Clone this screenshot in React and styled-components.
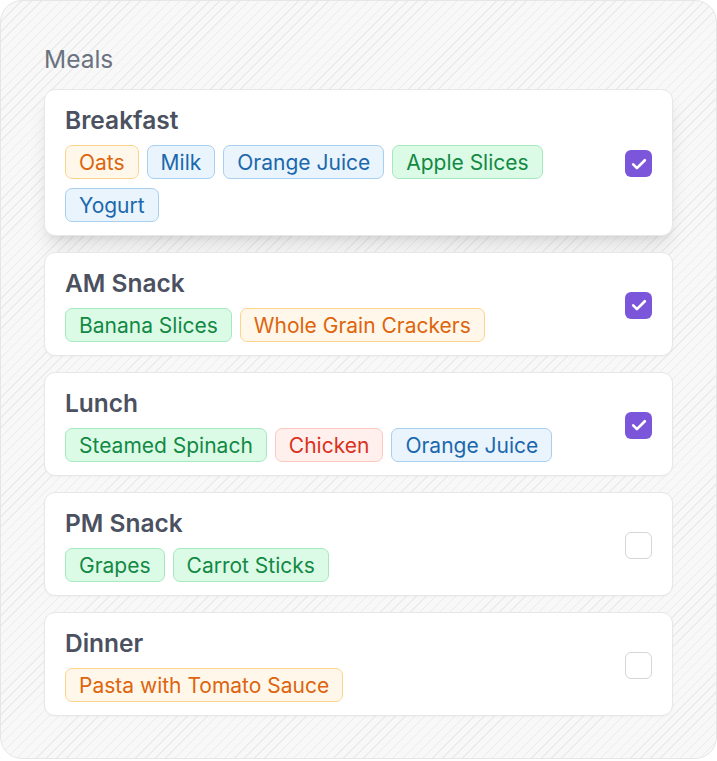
import React from "react";
import styled, { createGlobalStyle } from "styled-components";

const Global = createGlobalStyle`
  html, body { margin: 0; padding: 0; background: #ffffff; }
  body { font-family: Inter, "Noto Sans", sans-serif; -webkit-font-smoothing: antialiased; }
  * { box-sizing: border-box; }
`;

const Panel = styled.section`
  width: 717px;
  border: 1px solid #e6e6e6;
  border-radius: 22px;
  padding: 43px 43px 42px;
  background-color: #f7f7f7;
  background-image: repeating-linear-gradient(
    135deg,
    #ebebeb 0px,
    #ebebeb 1px,
    #f8f8f8 1px,
    #f8f8f8 7px
  );
`;

const Heading = styled.h2`
  margin: 0 0 15px;
  font-size: 24.5px;
  line-height: 30px;
  font-weight: 400;
  color: #6b7280;
`;

const List = styled.div`
  display: flex;
  flex-direction: column;
  gap: 16px;
`;

const Card = styled.div`
  display: flex;
  align-items: center;
  gap: 16px;
  padding: 15px 20px 13px;
  background: #ffffff;
  border: 1px solid #e5e7eb;
  border-radius: 11px;
  box-shadow: ${(p) =>
    p.$raised
      ? "0 14px 20px -4px rgba(0,0,0,0.10), 0 5px 9px -5px rgba(0,0,0,0.10)"
      : "0 1px 2px rgba(0,0,0,0.03)"};
`;

const Body = styled.div`
  flex: 1;
  min-width: 0;
`;

const Title = styled.h3`
  margin: 0 0 10px;
  font-size: 24.5px;
  line-height: 30px;
  font-weight: 600;
  color: #4b5160;
`;

const Tags = styled.div`
  display: flex;
  flex-wrap: wrap;
  column-gap: 8px;
  row-gap: 9px;
`;

const palette = {
  orange: { bg: "#fff8ea", border: "#fcd58c", fg: "#de640d" },
  blue: { bg: "#e9f4fc", border: "#a8cfef", fg: "#1b68ad" },
  green: { bg: "#dcfbe7", border: "#a6e8bf", fg: "#128944" },
  red: { bg: "#fff0ee", border: "#fcc8bf", fg: "#db3220" },
};

const Tag = styled.span`
  display: inline-flex;
  align-items: center;
  height: 34px;
  padding: 0 13px;
  border-radius: 7px;
  border: 1.5px solid ${(p) => palette[p.$tone].border};
  background: ${(p) => palette[p.$tone].bg};
  color: ${(p) => palette[p.$tone].fg};
  font-size: 21px;
  font-weight: 400;
  line-height: 1;
  white-space: nowrap;
`;

const Box = styled.span`
  flex: none;
  width: 27px;
  height: 27px;
  border-radius: 6px;
  display: inline-flex;
  align-items: center;
  justify-content: center;
  background: ${(p) => (p.$checked ? "#7c56da" : "#ffffff")};
  border: ${(p) => (p.$checked ? "none" : "1.5px solid #d4d6da")};
`;

const meals = [
  {
    name: "Breakfast",
    done: true,
    raised: true,
    items: [
      ["Oats", "orange"],
      ["Milk", "blue"],
      ["Orange Juice", "blue"],
      ["Apple Slices", "green"],
      ["Yogurt", "blue"],
    ],
  },
  {
    name: "AM Snack",
    done: true,
    items: [
      ["Banana Slices", "green"],
      ["Whole Grain Crackers", "orange"],
    ],
  },
  {
    name: "Lunch",
    done: true,
    items: [
      ["Steamed Spinach", "green"],
      ["Chicken", "red"],
      ["Orange Juice", "blue"],
    ],
  },
  {
    name: "PM Snack",
    done: false,
    items: [
      ["Grapes", "green"],
      ["Carrot Sticks", "green"],
    ],
  },
  {
    name: "Dinner",
    done: false,
    items: [["Pasta with Tomato Sauce", "orange"]],
  },
];

const Check = ({ checked }) => (
  <Box $checked={checked}>
    {checked && (
      <svg width="20" height="20" viewBox="0 0 24 24" fill="none">
        <path
          d="M5 12.5l4.5 4.5L19 7.5"
          stroke="#ffffff"
          strokeWidth="3.2"
          strokeLinecap="round"
          strokeLinejoin="round"
        />
      </svg>
    )}
  </Box>
);

export default function App() {
  return (
    <>
      <Global />
      <Panel>
        <Heading>Meals</Heading>
        <List>
          {meals.map((m) => (
            <Card key={m.name} $raised={m.raised}>
              <Body>
                <Title>{m.name}</Title>
                <Tags>
                  {m.items.map(([label, tone], i) => (
                    <Tag key={i} $tone={tone}>
                      {label}
                    </Tag>
                  ))}
                </Tags>
              </Body>
              <Check checked={m.done} />
            </Card>
          ))}
        </List>
      </Panel>
    </>
  );
}
